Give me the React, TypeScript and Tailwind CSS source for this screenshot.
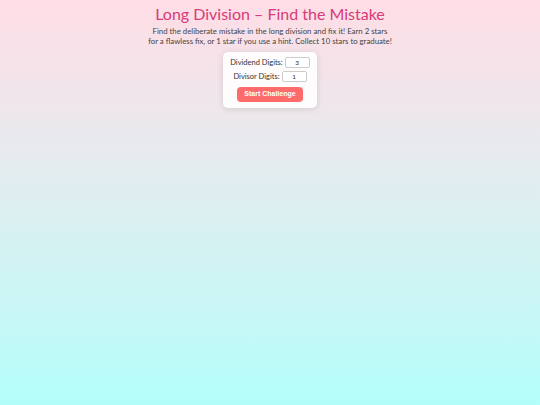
export default function App() {
  return (
    <div className="min-h-[405px] w-full bg-gradient-to-b from-[#ffdde6] to-[#b2fefa] font-['Lato',sans-serif] flex flex-col items-center">
      <h1 className="mt-[3px] text-[16px] leading-[22px] text-[#d93a78]">
        Long Division – Find the Mistake
      </h1>
      <p className="mt-[1px] text-center text-[7.8px] leading-[10px] text-[#444] whitespace-nowrap">
        Find the deliberate mistake in the long division and fix it! Earn 2 stars
        <br />
        for a flawless fix, or 1 star if you use a hint. Collect 10 stars to graduate!
      </p>
      <div className="mt-[6px] w-[94px] rounded-[5px] bg-white/90 shadow-[0_1px_6px_rgba(0,0,0,0.12)] flex flex-col items-center pt-[5px] pb-[6px]">
        <div className="flex items-center gap-[2px] text-[7.5px] text-[#333]">
          <span>Dividend Digits:</span>
          <div className="w-[25px] h-[11px] border border-[#ccc] rounded-[2px] bg-white text-[6.5px] flex items-center justify-center">3</div>
        </div>
        <div className="mt-[3px] flex items-center gap-[2px] text-[7.5px] text-[#333]">
          <span>Divisor Digits:</span>
          <div className="w-[25px] h-[11px] border border-[#ccc] rounded-[2px] bg-white text-[6.5px] flex items-center justify-center">1</div>
        </div>
        <button className="mt-[4px] w-[66px] h-[15px] rounded-[4px] bg-[#ff6b6b] text-white text-[7px] font-bold font-['Liberation_Sans',sans-serif]">
          Start Challenge
        </button>
      </div>
    </div>
  );
}
